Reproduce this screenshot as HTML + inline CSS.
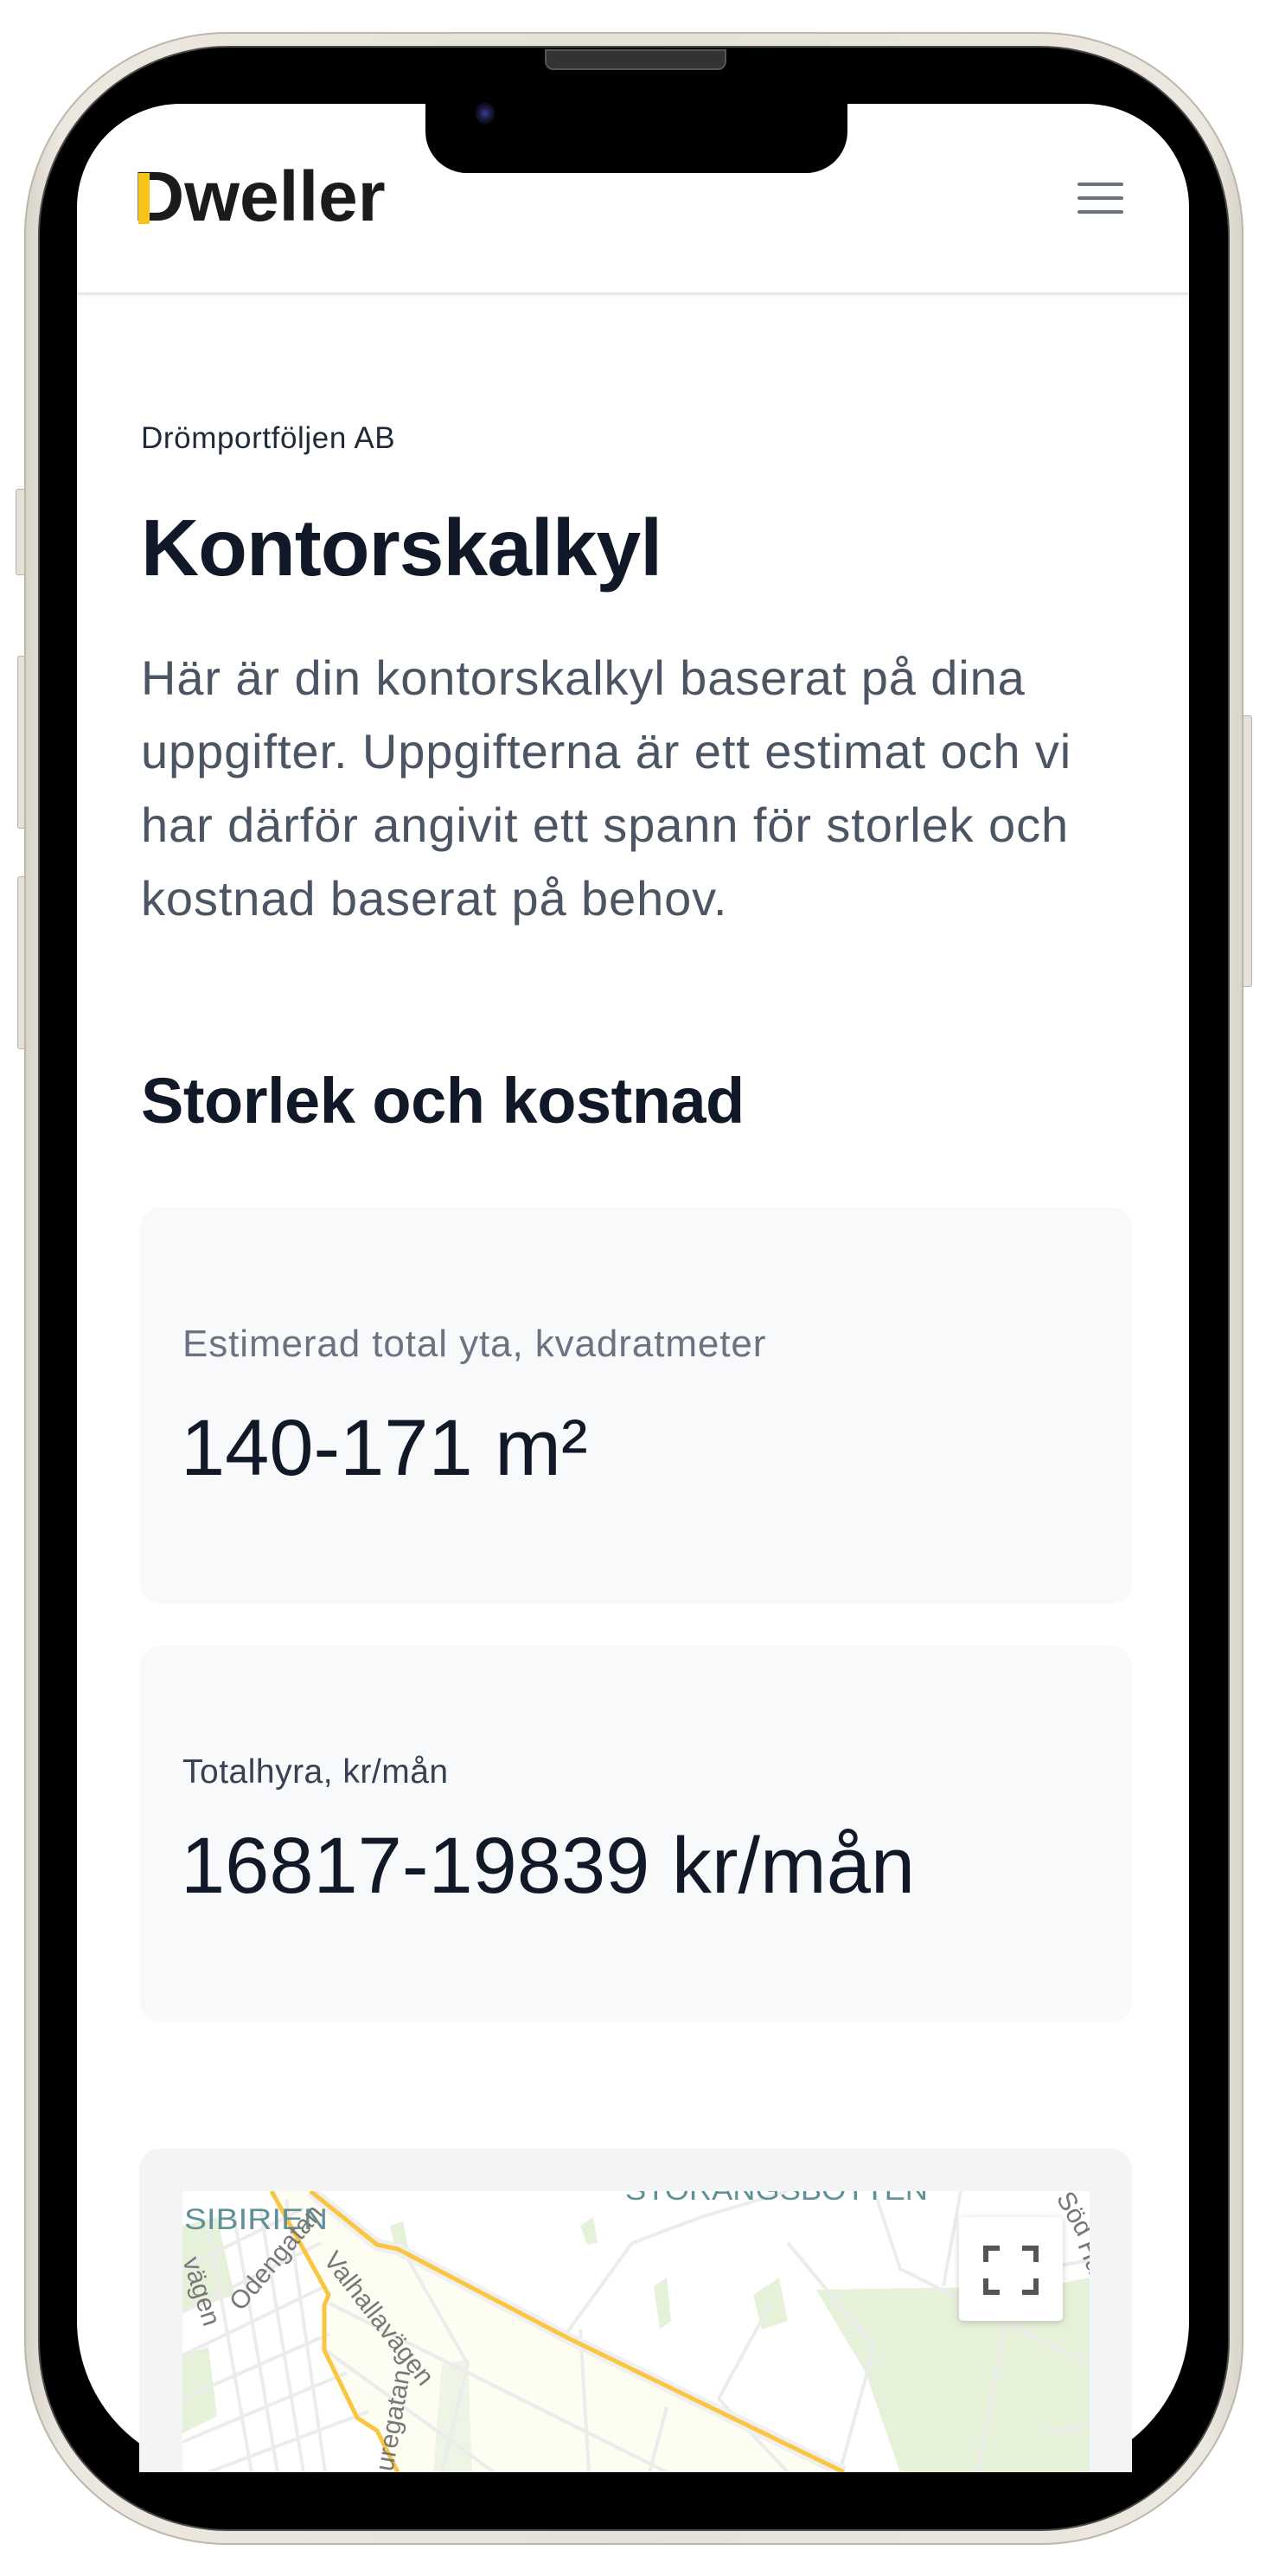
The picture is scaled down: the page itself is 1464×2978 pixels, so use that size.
<!DOCTYPE html>
<html><head><meta charset="utf-8"><style>
*{margin:0;padding:0;box-sizing:border-box}
body{width:1464px;height:2978px;background:#fff;position:relative;overflow:hidden;font-family:"Liberation Sans",sans-serif}
.abs{position:absolute}
.frame{left:28px;top:37px;width:1410px;height:2905px;border-radius:235px;background:linear-gradient(90deg,#d9d4c9,#ece8e0 3%,#e6e1d8 50%,#ece8e0 97%,#d9d4c9);box-shadow:inset 0 0 0 2px #bdb7ab}
.bezel{left:46px;top:55px;width:1374px;height:2869px;border-radius:218px;background:#000;box-shadow:0 0 0 2px #4a4a4a}
.screen{left:89px;top:120px;width:1286px;height:2738px;border-radius:120px 120px 175px 175px;background:#fff;overflow:hidden}
.btn{background:#e6e1d8;border:1px solid #b9b3a7;border-radius:3px}
.notch{left:492px;top:100px;width:488px;height:100px;background:#000;border-radius:0 0 48px 48px}
h1{position:absolute;left:163px;top:582px;font-size:93px;font-weight:700;color:#111827;line-height:1.1;letter-spacing:-1px}
.nw{white-space:nowrap}
</style></head><body>
<div class="abs btn" style="left:18px;top:565px;width:12px;height:100px"></div>
<div class="abs btn" style="left:20px;top:758px;width:10px;height:200px"></div>
<div class="abs btn" style="left:20px;top:1013px;width:10px;height:200px"></div>
<div class="abs btn" style="left:1436px;top:827px;width:12px;height:314px"></div>
<div class="abs frame"></div>
<div class="abs bezel"></div>
<div class="abs" style="left:630px;top:57px;width:210px;height:24px;background:#333;border-radius:0 0 10px 10px;border:2px solid #555"></div>
<div class="abs screen">
  <div class="abs" style="left:0;top:218px;width:1286px;height:3px;background:#e5e7eb;box-shadow:0 2px 4px rgba(0,0,0,.05)"></div>
</div>
<div class="abs notch"></div>
<div class="abs" style="left:550px;top:118px;width:22px;height:26px;border-radius:50%;background:radial-gradient(circle,#3a3f8f 0,#1a1a40 40%,#0a0a14 70%)"></div>

<div class="abs nw" style="left:154px;top:187px;font-size:82px;font-weight:700;color:#1b1b1b;letter-spacing:0px;line-height:1">Dweller</div>
<div class="abs" style="left:160px;top:200px;width:13px;height:59px;background:#f5c518"></div>
<div class="abs" style="left:1246px;top:211px;width:53px;height:4px;background:#6b7280;border-radius:2px"></div>
<div class="abs" style="left:1246px;top:227px;width:53px;height:4px;background:#6b7280;border-radius:2px"></div>
<div class="abs" style="left:1246px;top:243px;width:53px;height:4px;background:#6b7280;border-radius:2px"></div>

<div class="abs nw" style="left:163px;top:486px;font-size:35px;letter-spacing:0.6px;color:#1f2937;line-height:1.2">Drömportföljen AB</div>
<h1>Kontorskalkyl</h1>
<div class="abs nw" style="left:163px;top:741px;font-size:56px;letter-spacing:0.9px;line-height:85px;color:#4b5563">Här är din kontorskalkyl baserat på dina<br>uppgifter. Uppgifterna är ett estimat och vi<br>har därför angivit ett spann för storlek och<br>kostnad baserat på behov.</div>
<div class="abs nw" style="left:163px;top:1232px;font-size:74px;font-weight:700;color:#111827;line-height:1.1;letter-spacing:-0.5px">Storlek och kostnad</div>

<div class="abs" style="left:162px;top:1396px;width:1147px;height:458px;background:#f8f9fb;border-radius:24px"></div>
<div class="abs nw" style="left:211px;top:1528px;font-size:44px;letter-spacing:0.9px;color:#6b7280;line-height:1.2">Estimerad total yta, kvadratmeter</div>
<div class="abs nw" style="left:209px;top:1624px;font-size:92px;font-weight:500;color:#111827;line-height:1.1">140-171 m²</div>

<div class="abs" style="left:162px;top:1903px;width:1147px;height:435px;background:#f8f9fb;border-radius:24px"></div>
<div class="abs nw" style="left:211px;top:2026px;font-size:39px;letter-spacing:0.5px;color:#374151;line-height:1.2">Totalhyra, kr/mån</div>
<div class="abs nw" style="left:209px;top:2107px;font-size:92px;font-weight:500;color:#111827;line-height:1.1">16817-19839 kr/mån</div>

<div class="abs" style="left:161px;top:2484px;width:1148px;height:374px;background:#f3f4f6;border-radius:24px 24px 0 0"></div>
<svg class="abs" style="left:211px;top:2533px" width="1049" height="325" viewBox="0 0 1049 325">
  <rect width="1049" height="325" fill="#fff"/>
  <polygon points="733,114 1000,110 1049,100 1049,325 830,325 790,210" fill="#e6f1d9"/>
  <polygon points="0,40 40,30 60,120 0,140" fill="#e6f1d9"/>
  <polygon points="0,190 30,180 40,260 0,280" fill="#e6f1d9"/>
  <polygon points="240,40 255,35 262,70 248,75" fill="#e6f1d9"/>
  <polygon points="545,110 560,100 565,150 552,160" fill="#e6f1d9"/>
  <polygon points="460,40 475,30 480,60 468,62" fill="#e6f1d9"/>
  <polygon points="660,120 690,100 700,150 670,160" fill="#e6f1d9"/>
  <polygon points="103,0 148,0 225,62 249,67 446,170 765,325 249,325 225,277 202,262 164,184 164,132 169,120" fill="#fdfdf2"/>
  <polygon points="300,200 330,195 335,325 290,325" fill="#eef5e4"/>
  <g stroke="#ececec" stroke-width="4" fill="none">
    <path d="M0,90 L140,20 M0,140 L160,60 M0,190 L165,110 M0,240 L170,165 M0,290 L190,210 M30,325 L215,255"/>
    <path d="M30,40 L80,325 M60,30 L110,325 M90,20 L140,325 M120,10 L165,325"/>
    <path d="M160,180 L360,325 M170,130 L560,325 M250,60 L330,200 L300,325"/>
    <path d="M440,170 L520,60 L600,30 L700,0 M460,160 L470,325 M560,250 L540,325"/>
    <path d="M700,60 L800,180 L760,325 M800,0 L830,90 L1049,200 M900,0 L880,110 M680,130 L620,240 L700,325"/>
    <path d="M950,160 L920,325 M990,90 L1049,80 M1000,280 L1049,270"/>
  </g>
  <path d="M148,0 L225,62 L249,67 L446,170 L765,325" stroke="#f0f0f0" stroke-width="14" fill="none"/>
  <g stroke="#f8c640" stroke-width="5" fill="none" stroke-linejoin="round">
    <path d="M103,0 L169,120 L164,132 L164,184 L202,262 L225,277 L249,325"/>
    <path d="M148,0 L225,62 L249,67 L446,170 L765,325"/>
  </g>
  <g font-family="Liberation Sans Narrow,Liberation Sans,sans-serif" fill="#5f9199" font-size="34">
    <text x="2" y="44" textLength="166" lengthAdjust="spacingAndGlyphs">SIBIRIEN</text>
    <text x="512" y="10" textLength="350" lengthAdjust="spacingAndGlyphs">STORANGSBOTTEN</text>
  </g>
  <g font-family="Liberation Sans,sans-serif" fill="#777" font-size="30">
    <text transform="translate(68,140) rotate(-50)">Odengatan</text>
    <text transform="translate(162,80) rotate(52)">Valhallavägen</text>
    <text transform="translate(243,325) rotate(-80)">uregatan</text>
    <text transform="translate(0,80) rotate(72)">vägen</text>
    <text transform="translate(1010,8) rotate(60)">Söd</text>
    <text transform="translate(1035,62) rotate(68)">Ha</text>
  </g>
  <rect x="898" y="30" width="120" height="120" rx="5" fill="#fff" style="filter:drop-shadow(0 2px 4px rgba(0,0,0,.2))"/>
  <g stroke="#555" stroke-width="6" fill="none">
    <path d="M929,82 V66 H945 M971,66 H987 V82 M929,101 V117 H945 M971,117 H987 V101"/>
  </g>
</svg>
</body></html>
